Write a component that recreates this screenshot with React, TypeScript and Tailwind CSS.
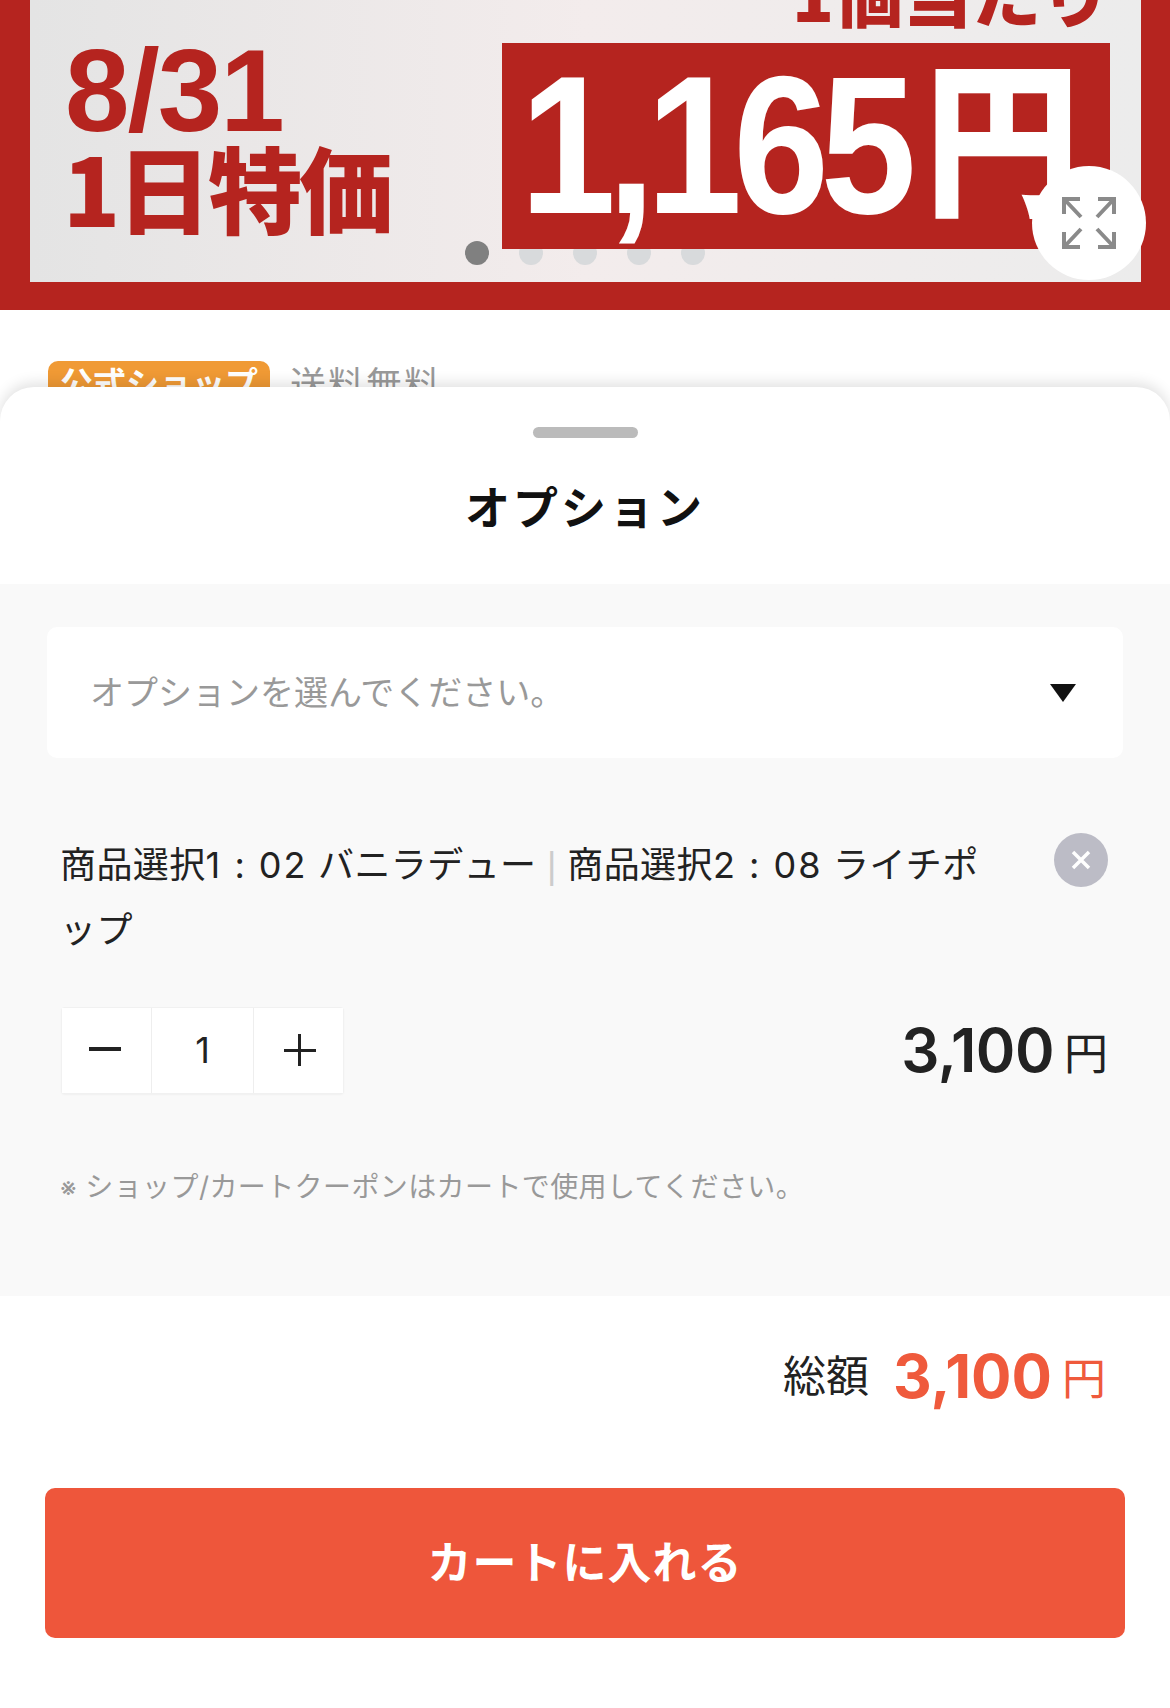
const jp = "font-['Inter','Noto_Sans_CJK_JP',sans-serif]";

function ExpandIcon() {
  return (
    <svg width="54" height="52" viewBox="0 0 54 52" fill="none" stroke="#8a8a8a" strokeWidth="4">
      <path d="M2 17V2h16M2 2l17 18" />
      <path d="M52 17V2H36M52 2 35 20" />
      <path d="M2 35v15h16M2 50l17-18" />
      <path d="M52 35v15H36M52 50 35 32" />
    </svg>
  );
}

function Banner() {
  return (
    <div className="relative h-[310px] shrink-0 overflow-hidden bg-[#b5241f] pr-[29px] pb-[28px] pl-[30px]">
      <div className="flex h-full overflow-hidden bg-gradient-to-r from-[#e4e4e4] via-[#f3ecec] to-[#ececec] pl-[35px] pr-[31px]">
        <div className="flex w-[437px] shrink-0 flex-col pt-[33px] font-bold text-[#b5241f]">
          <div className="font-['Liberation_Sans',sans-serif] text-[116px] leading-[116px] tracking-[-2px]">8/31</div>
          <div className="-mt-[19px] -ml-[2px] font-['Noto_Sans_CJK_JP',sans-serif] text-[94px] font-black leading-[112px] tracking-[-3px]">1日特価</div>
        </div>
        <div className="flex flex-1 flex-col">
          <div className="-mt-[59px] h-[102px] text-right font-['Noto_Sans_CJK_JP',sans-serif] text-[69px] font-black leading-[102px] text-[#b5241f]">1個当たり</div>
          <div className="relative z-10 flex h-[206px] items-center overflow-hidden bg-[#b5241f] pl-[18px] font-bold text-white">
            <span className="w-[404px] origin-left scale-x-[0.88] font-['Liberation_Sans',sans-serif] text-[196px] leading-[206px] tracking-[-10px]">1,165</span>
            <span className="-mt-[32px] origin-left scale-x-[0.93] font-['Noto_Sans_CJK_JP',sans-serif] text-[168px] font-black leading-[206px]">円</span>
          </div>
        </div>
      </div>
      {/* carousel dots, the red box sits over them */}
      <div className="absolute top-[241px] left-[465px] flex gap-[30px]">
        <span className="h-6 w-6 rounded-full bg-[#808080]" />
        <span className="h-6 w-6 rounded-full bg-[#d8dadc]" />
        <span className="h-6 w-6 rounded-full bg-[#d8dadc]" />
        <span className="h-6 w-6 rounded-full bg-[#d8dadc]" />
        <span className="h-6 w-6 rounded-full bg-[#d8dadc]" />
      </div>
      <button className="absolute top-[166px] left-[1032px] z-20 flex h-[114px] w-[114px] items-center justify-center rounded-full bg-white">
        <ExpandIcon />
      </button>
    </div>
  );
}

function Stepper() {
  return (
    <div className="flex h-[87px] w-[283px] items-stretch gap-[1px] rounded-[4px] border border-[#f1f1f1] bg-[#eeeeee] text-[36px] text-[#222] shadow-[0_1px_2px_rgba(0,0,0,0.04)]">
      <div className="flex w-[89px] items-center justify-center bg-white">
        <span className="h-[4px] w-[32px] -translate-x-[2px] -translate-y-[1px] bg-[#222]" />
      </div>
      <div className="flex flex-1 items-center justify-center bg-white">1</div>
      <div className="relative flex w-[89px] translate-x-0 items-center justify-center bg-white">
        <span className="h-[3px] w-[32px] translate-x-[1px] bg-[#222]" />
        <span className="absolute h-[32px] w-[3px] translate-x-[1px] bg-[#222]" />
      </div>
    </div>
  );
}

export default function App() {
  return (
    <div className={`relative h-[1708px] w-[1170px] overflow-hidden bg-white ${jp}`}>
      <Banner />
      <div className="flex items-center gap-[20px] pt-[48px] pl-[48px]">
        <span className="flex h-[48px] w-[222px] items-center justify-center rounded-[10px] bg-[#f09a35] text-[33px] font-bold text-white">公式ショップ</span>
        <span className="text-[36px] tracking-[2px] text-[#999]">送料無料</span>
      </div>

      {/* bottom sheet */}
      <div className="absolute inset-x-0 top-[387px] bottom-0 flex flex-col rounded-t-[34px] bg-white shadow-[0_-4px_14px_rgba(0,0,0,0.12)]">
        <div className="flex h-[197px] shrink-0 flex-col items-center pt-[40px]">
          <span className="h-[11px] w-[105px] rounded-full bg-[#bbbbbb]" />
          <h2 className="mt-[39px] text-[45px] font-bold leading-[64px] tracking-[3px] text-[#111]">オプション</h2>
        </div>

        <div className="flex h-[712px] shrink-0 flex-col bg-[#f9f9f9] pt-[43px]">
          <div className="mx-[47px] flex h-[131px] items-center justify-between rounded-[10px] bg-white pr-[47px] pl-[43px]">
            <span className="text-[34px] text-[#999]">オプションを選んでください。</span>
            <span className="h-0 w-0 border-x-[13px] border-t-[18px] border-x-transparent border-t-[#111]" />
          </div>

          <div className="mt-[75px] flex items-start justify-between pr-[62px] pl-[60px]">
            <p className="w-[925px] text-[36px] leading-[65px] tracking-[0.4px] text-[#222]">
              商品選択<span className="tracking-[2px]">1 : 02</span> バニラデュー <span className="font-['Liberation_Sans',sans-serif] font-light text-[#ccc]">|</span> 商品選択<span className="tracking-[2px]">2 : 08</span> ライチポップ
            </p>
            <button className="flex h-[54px] w-[54px] shrink-0 items-center justify-center rounded-full bg-[#bcbcc6]">
              <svg width="20" height="20" viewBox="0 0 20 20" stroke="#fff" strokeWidth="3.5">
                <path d="M2 2l16 16M18 2 2 18" />
              </svg>
            </button>
          </div>

          <div className="mt-[42px] flex items-center justify-between pr-[62px] pl-[61px]">
            <Stepper />
            <div className="flex items-baseline gap-[10px] text-[#222]">
              <span className="text-[60px] font-semibold tracking-[-0.5px]">3,100</span>
              <span className="-translate-y-[2px] text-[44px]">円</span>
            </div>
          </div>

          <p className="mt-[70px] pl-[60px] text-[28px] leading-[44px] tracking-[0.4px] text-[#999]">
            <span className="text-[26px]">※</span> ショップ/カートクーポンはカートで使用してください。
          </p>
        </div>

        <div className="flex h-[192px] shrink-0 items-center justify-end gap-[24px] pr-[64px] pb-[32px]">
          <span className="text-[43px] text-[#222]">総額</span>
          <div className="flex items-baseline gap-[10px] text-[#ef5a3c]">
            <span className="text-[60px] font-bold">3,100</span>
            <span className="-translate-y-[3px] text-[44px]">円</span>
          </div>
        </div>

        <div className="px-[45px]">
          <button className="flex h-[150px] w-full items-center justify-center rounded-[10px] bg-[#ee563b] text-[44px] font-bold tracking-[1px] text-white">
            カートに入れる
          </button>
        </div>
      </div>
    </div>
  );
}
